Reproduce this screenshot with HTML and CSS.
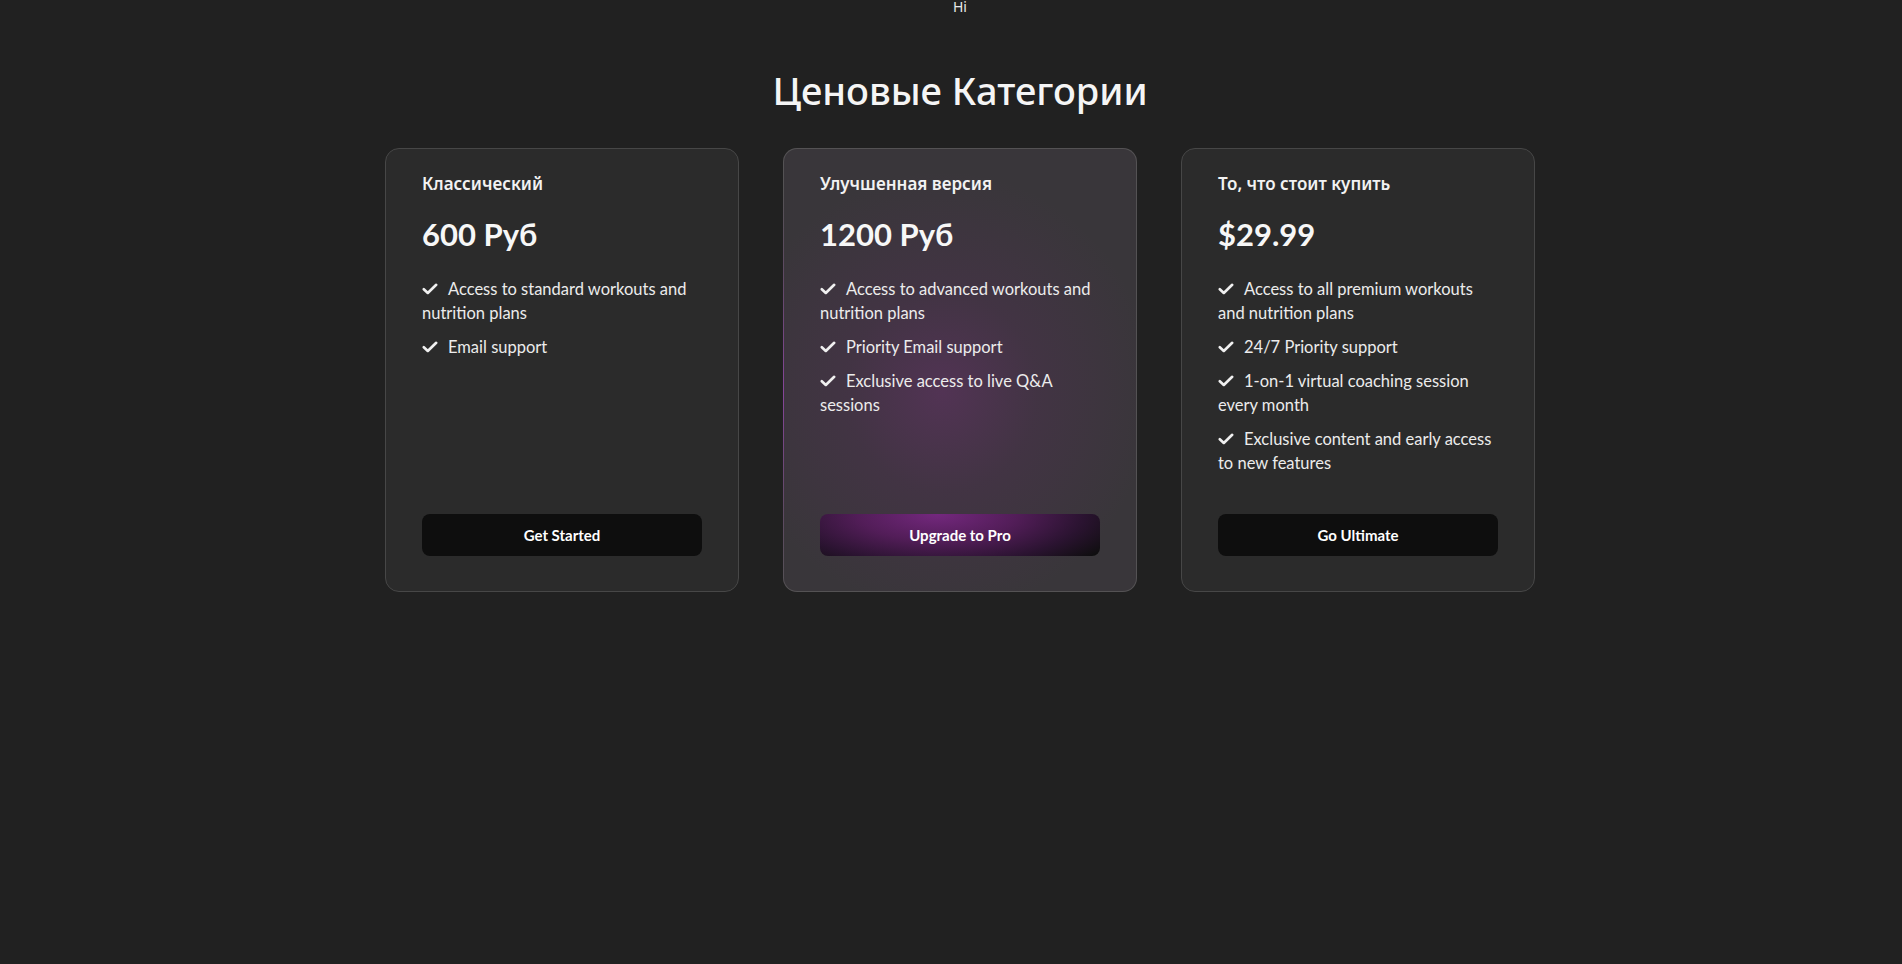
FILE: index.html
```html
<!DOCTYPE html>
<html lang="ru">
<head>
<meta charset="utf-8">
<title>Ценовые Категории</title>
<link rel="stylesheet" href="styles.css">
</head>
<body>
<div class="hi">Hi</div>
<section class="pricing">
  <h1 class="pricing-title">Ценовые Категории</h1>
  <div class="cards">
    <div class="card">
      <div class="card-name">Классический</div>
      <div class="card-price">600 Руб</div>
      <ul class="features">
        <li><svg class="check" viewBox="0 0 16 12"><path d="M1.8 6.2 L5.8 10 L14.2 1.8"/></svg>Access to standard workouts and nutrition plans</li>
        <li><svg class="check" viewBox="0 0 16 12"><path d="M1.8 6.2 L5.8 10 L14.2 1.8"/></svg>Email support</li>
      </ul>
      <button class="btn">Get Started</button>
    </div>
    <div class="card card-pro">
      <div class="card-name">Улучшенная версия</div>
      <div class="card-price">1200 Руб</div>
      <ul class="features">
        <li><svg class="check" viewBox="0 0 16 12"><path d="M1.8 6.2 L5.8 10 L14.2 1.8"/></svg>Access to advanced workouts and nutrition plans</li>
        <li><svg class="check" viewBox="0 0 16 12"><path d="M1.8 6.2 L5.8 10 L14.2 1.8"/></svg>Priority Email support</li>
        <li><svg class="check" viewBox="0 0 16 12"><path d="M1.8 6.2 L5.8 10 L14.2 1.8"/></svg>Exclusive access to live Q&amp;A sessions</li>
      </ul>
      <button class="btn btn-pro">Upgrade to Pro</button>
    </div>
    <div class="card">
      <div class="card-name">То, что стоит купить</div>
      <div class="card-price">$29.99</div>
      <ul class="features">
        <li><svg class="check" viewBox="0 0 16 12"><path d="M1.8 6.2 L5.8 10 L14.2 1.8"/></svg>Access to all premium workouts and nutrition plans</li>
        <li><svg class="check" viewBox="0 0 16 12"><path d="M1.8 6.2 L5.8 10 L14.2 1.8"/></svg>24/7 Priority support</li>
        <li><svg class="check" viewBox="0 0 16 12"><path d="M1.8 6.2 L5.8 10 L14.2 1.8"/></svg>1-on-1 virtual coaching session every month</li>
        <li><svg class="check" viewBox="0 0 16 12"><path d="M1.8 6.2 L5.8 10 L14.2 1.8"/></svg>Exclusive content and early access to new features</li>
      </ul>
      <button class="btn">Go Ultimate</button>
    </div>
  </div>
</section>
</body>
</html>
```
FILE: styles.css
```css
html, body {
  margin: 0;
  padding: 0;
  background: #212121;
  color: #f2f2f2;
  font-family: Lato, "Noto Sans", sans-serif;
}

.hi {
  text-align: center;
  padding-left: 18px;
  font-family: "Noto Sans", sans-serif;
  font-size: 14px;
  line-height: 14px;
  color: #e8e8e8;
}

.pricing {
  padding-left: 18px;
  display: flex;
  flex-direction: column;
  align-items: center;
}

.pricing-title {
  margin: 52px 0 0;
  font-family: "Noto Sans", sans-serif;
  font-weight: 500;
  font-size: 38px;
  line-height: 48px;
  color: #f5f5f5;
}

.cards {
  display: flex;
  gap: 44px;
  margin-top: 34px;
  align-items: stretch;
}

.card {
  box-sizing: border-box;
  width: 354px;
  min-height: 444px;
  padding: 23px 36px 35px;
  display: flex;
  flex-direction: column;
  background: #2b2b2b;
  border: 1px solid #474747;
  border-radius: 14px;
}

.card-pro {
  border: 1px solid transparent;
  background:
    radial-gradient(ellipse 60% 50% at 45% 55%, rgba(112, 48, 116, 0.45) 0%, rgba(98, 44, 102, 0.22) 45%, rgba(60, 55, 62, 0) 100%) padding-box,
    linear-gradient(#39363a, #39363a) padding-box,
    radial-gradient(ellipse 40% 45% at 0% 55%, #86459a 0%, #5e4a63 60%, #545254 100%) border-box;
}

.card-name {
  font-family: "Noto Sans", sans-serif;
  font-weight: 600;
  font-size: 17px;
  line-height: 24px;
  color: #f2f2f2;
}

.card-price {
  margin-top: 18px;
  font-weight: 700;
  font-size: 31px;
  line-height: 40px;
  color: #f7f7f7;
}

.features {
  list-style: none;
  margin: 23px 0 0;
  padding: 0;
  font-size: 16.5px;
  line-height: 24px;
  color: #ececec;
}

.features li {
  margin-bottom: 10px;
}

.check {
  width: 16px;
  height: 12px;
  margin-right: 10px;
  vertical-align: 0px;
  fill: none;
  stroke: #f0f0f0;
  stroke-width: 2.6;
  stroke-linecap: round;
  stroke-linejoin: round;
}

.btn {
  margin-top: auto;
  height: 42px;
  width: 100%;
  border: none;
  border-radius: 8px;
  background: #0e0e0e;
  color: #ffffff;
  font-family: Lato, "Noto Sans", sans-serif;
  font-weight: 700;
  font-size: 15px;
  cursor: pointer;
}

.btn-pro {
  background: radial-gradient(ellipse 75% 170% at 42% 0%, #74287e 0%, #521d58 38%, #2a1330 70%, #0e0e0e 95%);
}
```
